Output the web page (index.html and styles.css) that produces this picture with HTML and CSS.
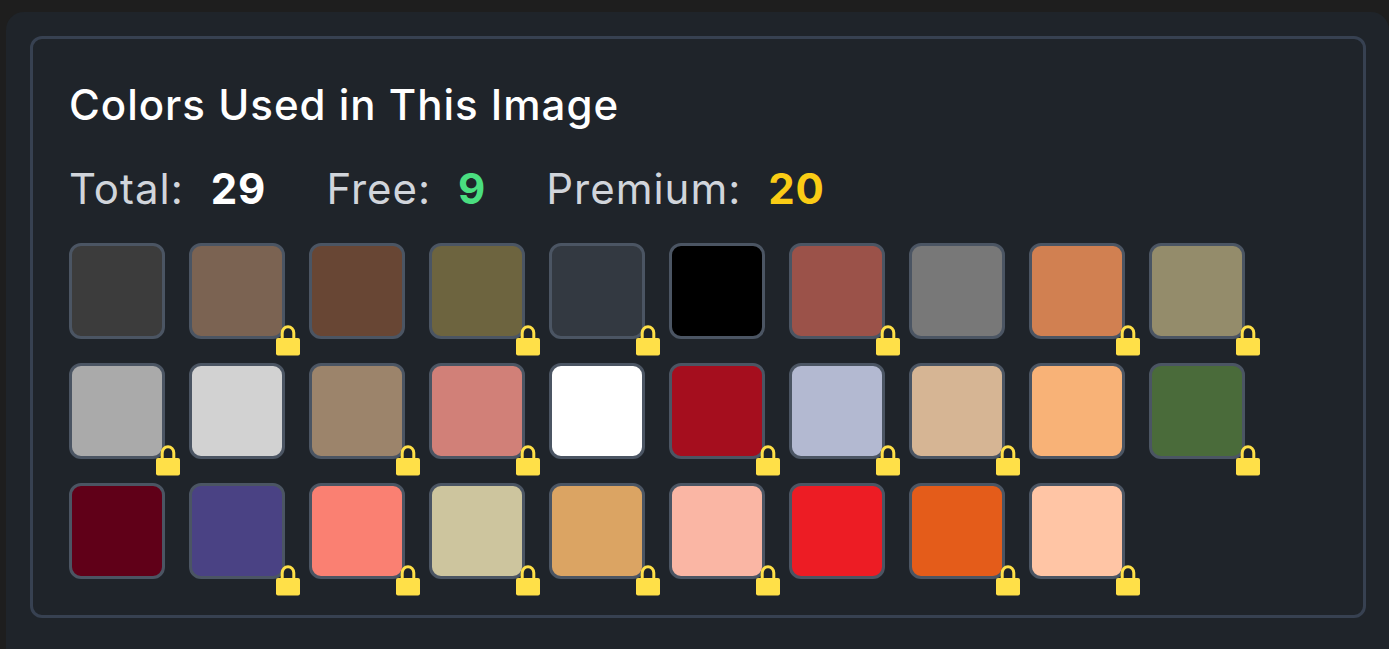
FILE: index.html
```html
<!DOCTYPE html>
<html lang="en">
<head>
    <meta charset="UTF-8">
    <meta name="viewport" content="width=device-width, initial-scale=1.0">
    <title>Image Colors</title>
    <link rel="stylesheet" href="styles.css">
</head>
<body>
    <main class="panel">
        <section class="colors-card">
            <h2>Colors Used in This Image</h2>

            <div class="stats">
                <span>Total: <strong class="total" id="totalCount"></strong></span>
                <span>Free: <strong class="free" id="freeCount"></strong></span>
                <span>Premium: <strong class="premium" id="premiumCount"></strong></span>
            </div>

            <div class="swatches" id="swatches"></div>
        </section>
    </main>

    <script src="script.js"></script>
</body>
</html>
```
FILE: styles.css
```css
body {
    box-sizing: border-box;
    display: flex;
    min-height: 100vh;
    margin: 0;
    padding: 12px 0 0 6px;
    background-color: #1e1e1e;
    color: #fff;
    font-family: Inter, sans-serif;
    letter-spacing: 1px;
}
.panel {
    flex: 1;
    border-radius: 18px 18px 0 0;
    padding: 24px 23px 24px 24px;
    background-color: #1f242a;
}
.colors-card {
    border: 3px solid #374151;
    border-radius: 12px;
    padding: 36px;
}
h2 {
    margin: 0 0 24px;
    font-size: 42px;
    font-weight: 500;
    line-height: 60px;
}
.stats {
    display: flex;
    flex-wrap: wrap;
    gap: 0 60px;
    margin-bottom: 24px;
    color: #d1d5db;
    font-size: 42px;
    line-height: 60px;
}
.stats strong {
    margin-left: 14px;
    font-weight: 700;
}
.total {
    color: #fff;
}
.free {
    color: #4ade80;
}
.premium {
    color: #facc15;
}
.swatches {
    display: flex;
    flex-wrap: wrap;
    gap: 24px;
}
.swatch {
    position: relative;
    width: 96px;
    height: 96px;
    padding: 0;
    border: 3px solid #4b5563;
    border-radius: 12px;
    cursor: pointer;
}
.swatch svg {
    position: absolute;
    right: -18px;
    bottom: -20px;
    width: 24px;
    height: 31px;
}
```
FILE: script.js
```javascript
const colors = [
    { hex: '#3c3c3c', premium: false },
    { hex: '#7b6352', premium: true },
    { hex: '#684634', premium: false },
    { hex: '#6d643f', premium: true },
    { hex: '#333941', premium: true },
    { hex: '#000000', premium: false },
    { hex: '#9b5249', premium: true },
    { hex: '#787878', premium: false },
    { hex: '#d18051', premium: true },
    { hex: '#948c6b', premium: true },
    { hex: '#aaaaaa', premium: true },
    { hex: '#d2d2d2', premium: false },
    { hex: '#9c846b', premium: true },
    { hex: '#d18078', premium: true },
    { hex: '#ffffff', premium: false },
    { hex: '#a50e1e', premium: true },
    { hex: '#b3b9d1', premium: true },
    { hex: '#d6b594', premium: true },
    { hex: '#f8b277', premium: false },
    { hex: '#4a6b3a', premium: true },
    { hex: '#600018', premium: false },
    { hex: '#4a4284', premium: true },
    { hex: '#fa8072', premium: true },
    { hex: '#cdc59e', premium: true },
    { hex: '#dba463', premium: true },
    { hex: '#fab6a4', premium: true },
    { hex: '#ed1c24', premium: false },
    { hex: '#e45c1a', premium: true },
    { hex: '#ffc5a5', premium: true }
];

const lockIcon = `
    <svg viewBox="0 0 24 31" aria-hidden="true">
        <path d="M6.2 14V7.8a5.8 6 0 0 1 11.6 0V14" fill="none" stroke="#ffe048" stroke-width="3"/>
        <rect y="13" width="24" height="17.5" rx="2" fill="#ffe048"/>
    </svg>
`;

const swatches = document.getElementById('swatches');

colors.forEach(color => {
    const button = document.createElement('button');
    button.type = 'button';
    button.className = 'swatch';
    button.style.backgroundColor = color.hex;
    button.setAttribute('aria-label', color.premium ? `${color.hex} (premium)` : color.hex);
    if (color.premium) button.innerHTML = lockIcon;
    swatches.appendChild(button);
});

const premiumCount = colors.filter(color => color.premium).length;
document.getElementById('totalCount').textContent = colors.length;
document.getElementById('freeCount').textContent = colors.length - premiumCount;
document.getElementById('premiumCount').textContent = premiumCount;
```
